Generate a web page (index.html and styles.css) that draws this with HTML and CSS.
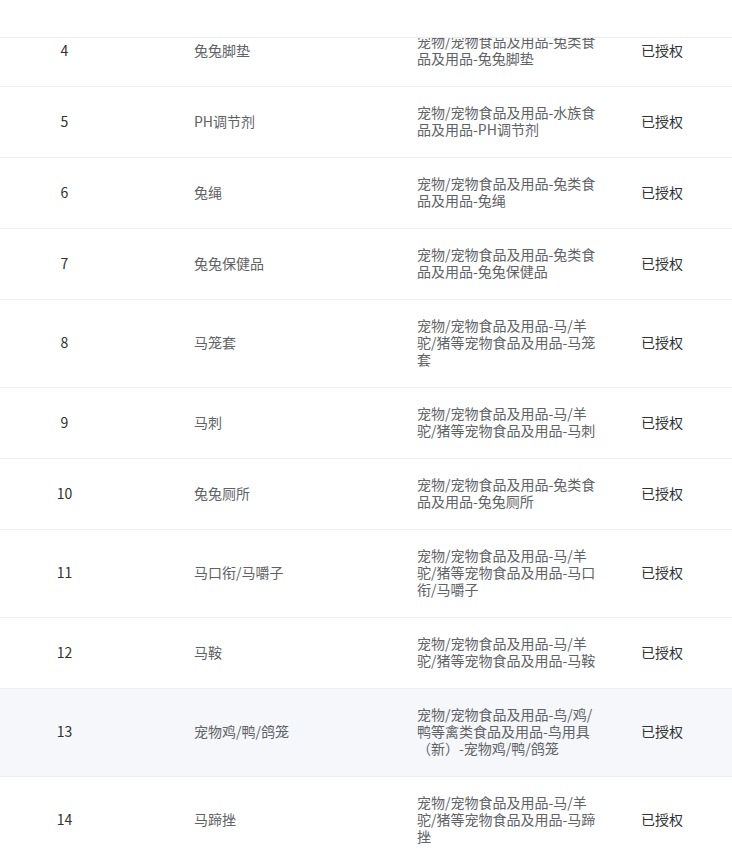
FILE: index.html
```html
<!DOCTYPE html>
<html lang="zh-CN">
<head>
<meta charset="utf-8">
<title>授权列表</title>
<link rel="stylesheet" href="styles.css">
</head>
<body>
<div class="table">
  <div class="head"></div>
  <div class="viewport">
    <div class="rows">
      <div class="row"><div class="c-idx">4</div><div class="c-name">兔兔脚垫</div><div class="c-cat">宠物/宠物食品及用品-兔类食品及用品-兔兔脚垫</div><div class="c-st">已授权</div></div>
      <div class="row"><div class="c-idx">5</div><div class="c-name">PH调节剂</div><div class="c-cat">宠物/宠物食品及用品-水族食品及用品-PH调节剂</div><div class="c-st">已授权</div></div>
      <div class="row"><div class="c-idx">6</div><div class="c-name">兔绳</div><div class="c-cat">宠物/宠物食品及用品-兔类食品及用品-兔绳</div><div class="c-st">已授权</div></div>
      <div class="row"><div class="c-idx">7</div><div class="c-name">兔兔保健品</div><div class="c-cat">宠物/宠物食品及用品-兔类食品及用品-兔兔保健品</div><div class="c-st">已授权</div></div>
      <div class="row"><div class="c-idx">8</div><div class="c-name">马笼套</div><div class="c-cat">宠物/宠物食品及用品-马/羊驼/猪等宠物食品及用品-马笼套</div><div class="c-st">已授权</div></div>
      <div class="row"><div class="c-idx">9</div><div class="c-name">马刺</div><div class="c-cat">宠物/宠物食品及用品-马/羊驼/猪等宠物食品及用品-马刺</div><div class="c-st">已授权</div></div>
      <div class="row"><div class="c-idx">10</div><div class="c-name">兔兔厕所</div><div class="c-cat">宠物/宠物食品及用品-兔类食品及用品-兔兔厕所</div><div class="c-st">已授权</div></div>
      <div class="row"><div class="c-idx">11</div><div class="c-name">马口衔/马嚼子</div><div class="c-cat">宠物/宠物食品及用品-马/羊驼/猪等宠物食品及用品-马口衔/马嚼子</div><div class="c-st">已授权</div></div>
      <div class="row"><div class="c-idx">12</div><div class="c-name">马鞍</div><div class="c-cat">宠物/宠物食品及用品-马/羊驼/猪等宠物食品及用品-马鞍</div><div class="c-st">已授权</div></div>
      <div class="row hover"><div class="c-idx">13</div><div class="c-name">宠物鸡/鸭/鸽笼</div><div class="c-cat">宠物/宠物食品及用品-鸟/鸡/鸭等禽类食品及用品-鸟用具（新）-宠物鸡/鸭/鸽笼</div><div class="c-st">已授权</div></div>
      <div class="row"><div class="c-idx">14</div><div class="c-name">马蹄挫</div><div class="c-cat">宠物/宠物食品及用品-马/羊驼/猪等宠物食品及用品-马蹄挫</div><div class="c-st">已授权</div></div>
    </div>
  </div>
</div>
</body>
</html>
```

FILE: styles.css
```css
html, body {
  margin: 0;
  padding: 0;
  background: #fff;
}
body {
  font-family: "Noto Sans CJK SC", "Noto Sans", sans-serif;
  font-size: 14px;
  line-height: 17px;
  color: #606266;
}
.table {
  width: 732px;
  height: 858px;
  display: flex;
  flex-direction: column;
  overflow: hidden;
}
.head {
  height: 37px;
  flex: none;
  border-bottom: 1px solid #ebeef5;
  background: #fff;
}
.viewport {
  flex: 1;
  overflow: hidden;
}
.rows {
  margin-top: -22px;
}
.row {
  display: grid;
  grid-template-columns: 129px 278px 224px 1fr;
  align-items: center;
  padding: 17px 0 19px;
  border-bottom: 1px solid #ebeef5;
}
.row.hover {
  background: #f5f7fa;
}
.c-idx {
  text-align: center;
  color: #303133;
}
.c-name {
  padding-left: 65px;
}
.c-cat {
  padding-left: 10px;
  padding-right: 30px;
}
.c-st {
  padding-left: 10px;
  color: #303133;
}
```
